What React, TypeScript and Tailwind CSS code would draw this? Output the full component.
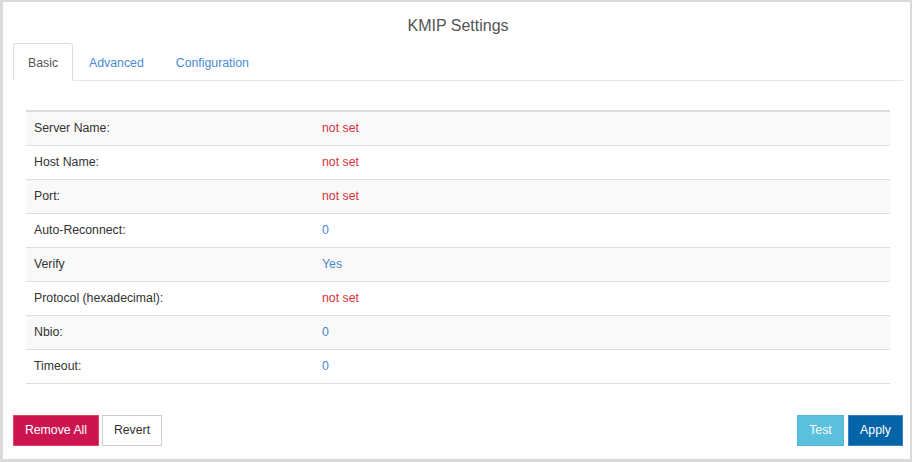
import React from "react";

const rows: { label: string; value: string; kind: "red" | "blue" }[] = [
  { label: "Server Name:", value: "not set", kind: "red" },
  { label: "Host Name:", value: "not set", kind: "red" },
  { label: "Port:", value: "not set", kind: "red" },
  { label: "Auto-Reconnect:", value: "0", kind: "blue" },
  { label: "Verify", value: "Yes", kind: "blue" },
  { label: "Protocol (hexadecimal):", value: "not set", kind: "red" },
  { label: "Nbio:", value: "0", kind: "blue" },
  { label: "Timeout:", value: "0", kind: "blue" },
];

export default function App() {
  return (
    <div
      className="w-[912px] h-[462px] bg-white border-t-2 border-r-2 border-l-[3px] border-b-[3px] border-[#dadada] pl-[10px] pr-[7px] pb-[13px] flex flex-col text-[12.3px] text-[#333]"
      style={{ fontFamily: '"Liberation Sans", Arial, sans-serif' }}
    >
      <div className="h-[41px] pt-[13px] text-center text-[16px] leading-[22px] text-[#555]">
        KMIP Settings
      </div>
      <div className="flex h-[38px] border-b border-[#e6e6e6]">
        <div className="h-[38px] -mb-px pt-[2px] px-[14px] mr-[1px] flex items-center bg-white border border-[#ddd] border-b-transparent rounded-t-[3px] text-[#555]">
          Basic
        </div>
        <div className="h-[37px] pt-[3px] px-[15px] mr-[2px] flex items-center text-[#4a8bd5]">
          Advanced
        </div>
        <div className="h-[37px] pt-[3px] px-[15px] flex items-center text-[#4a8bd5]">
          Configuration
        </div>
      </div>
      <div className="mt-[29px] mx-[13px] border-t-2 border-[#ddd]">
        {rows.map((r, i) => (
          <div
            key={r.label}
            className={`h-[34px] grid grid-cols-[296px_1fr] items-center border-b border-[#ddd] ${
              i % 2 === 0 ? "bg-[#f9f9f9]" : "bg-white"
            }`}
          >
            <div className="pl-[8px]">{r.label}</div>
            <div className={r.kind === "red" ? "text-[#d8333f]" : "text-[#4a86c8]"}>{r.value}</div>
          </div>
        ))}
      </div>
      <div className="mt-[31px] flex items-center justify-between">
        <div className="flex gap-[3px]">
          <button className="w-[86px] h-[31px] bg-[#cc1550] border border-[#e0455f] text-white">
            Remove All
          </button>
          <button className="w-[60px] h-[31px] bg-white border border-[#cccccc] text-[#333]">
            Revert
          </button>
        </div>
        <div className="flex gap-[4px]">
          <button className="w-[47px] h-[31px] bg-[#5bc0de] border border-[#4fb6d8] text-white">
            Test
          </button>
          <button className="w-[55px] h-[31px] bg-[#0364a8] border border-[#3a82c4] text-white">
            Apply
          </button>
        </div>
      </div>
    </div>
  );
}
